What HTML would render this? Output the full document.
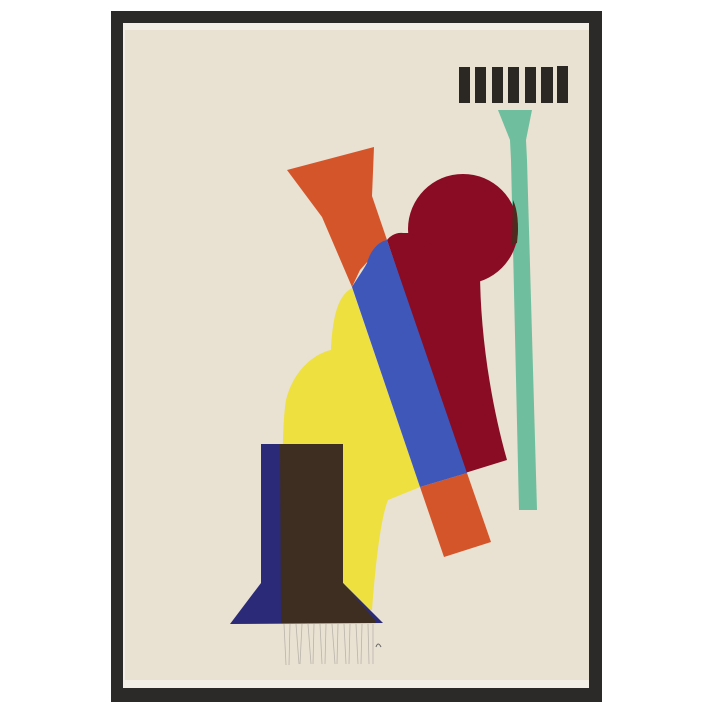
<!DOCTYPE html>
<html><head><style>html,body{margin:0;padding:0;background:#fff;width:713px;height:713px;overflow:hidden}</style></head>
<body>
<svg width="713" height="713" viewBox="0 0 713 713" xmlns="http://www.w3.org/2000/svg">
<rect x="0" y="0" width="713" height="713" fill="#fff"/>
<rect x="111" y="11" width="491" height="691" fill="#2b2a29"/>
<rect x="123" y="23" width="466" height="665" fill="#f3efe6"/>
<rect x="125" y="30" width="464" height="650" fill="#e9e1d1"/>
<!-- bars -->
<g fill="#2b2722">
<rect x="459" y="67" width="11" height="36"/><rect x="475" y="67" width="11" height="36"/>
<rect x="492" y="67" width="11" height="36"/><rect x="508" y="67" width="11" height="36"/>
<rect x="525" y="67" width="11" height="36"/><rect x="541" y="67" width="12" height="36"/>
<rect x="557" y="66" width="11" height="37"/>
</g>
<!-- teal -->
<path d="M498,110 L532,110 L526,140 L527,160 L537,510 L519,510 L511,160 L510,140 Z" fill="#6fbe9e"/>
<!-- yellow -->
<path d="M352,288 C340,295 333,310 331,350 C310,355 292,375 286,400 C281,430 283,500 282,560 L290,610 L372,610 C375,570 380,520 388,500 L420,487 Z" fill="#ede03f"/>
<!-- maroon -->
<circle cx="463" cy="229" r="55" fill="#890c24"/>
<path d="M387,240 C390,236 396,232 403,233 L410,233 L480,270 C480,330 490,400 507,460 L465,473 Z" fill="#890c24"/>
<path d="M513,200 Q520,215 517,243 L512,245 Z" fill="#4f2a1e"/>
<!-- orange -->
<path d="M287,170 L374,147 L372,196 L387,240 L360,270 L352,287 L322,217 Z" fill="#d5552a"/>
<path d="M420,487 L467,473 L491,542 L444,557 Z" fill="#d5552a"/>
<!-- blue -->
<path d="M387,240 L467,473 L420,487 L352,287 C356,280 362,272 367,263 C370,252 377,242 387,240 Z" fill="#3f57b9"/>
<!-- navy + brown -->
<path d="M261,444 L343,444 L343,583 L383,623 L230,624 L261,583 Z" fill="#2b2a78"/>
<path d="M280,444 L343,444 L343,583 L375,620 L375,623 L281,623 Z" fill="#3e2e22"/>
<!-- fringe -->
<g stroke="#b9b4ab" stroke-width="0.8">
<path d="M284,624 L286,665 M290,624 L289,665 M296,624 L299,664 M302,624 L300,664 M308,624 L311,664 M314,624 L313,664 M320,624 L322,664 M326,624 L325,664 M332,624 L335,664 M338,624 L337,664 M344,624 L346,664 M350,624 L349,664 M356,624 L358,664 M362,624 L361,664 M368,624 L369,664 M373,624 L373,664"/>
</g>
<path d="M376,647 Q378,641 381,647" stroke="#666" stroke-width="1" fill="none"/>
</svg>
</body></html>
